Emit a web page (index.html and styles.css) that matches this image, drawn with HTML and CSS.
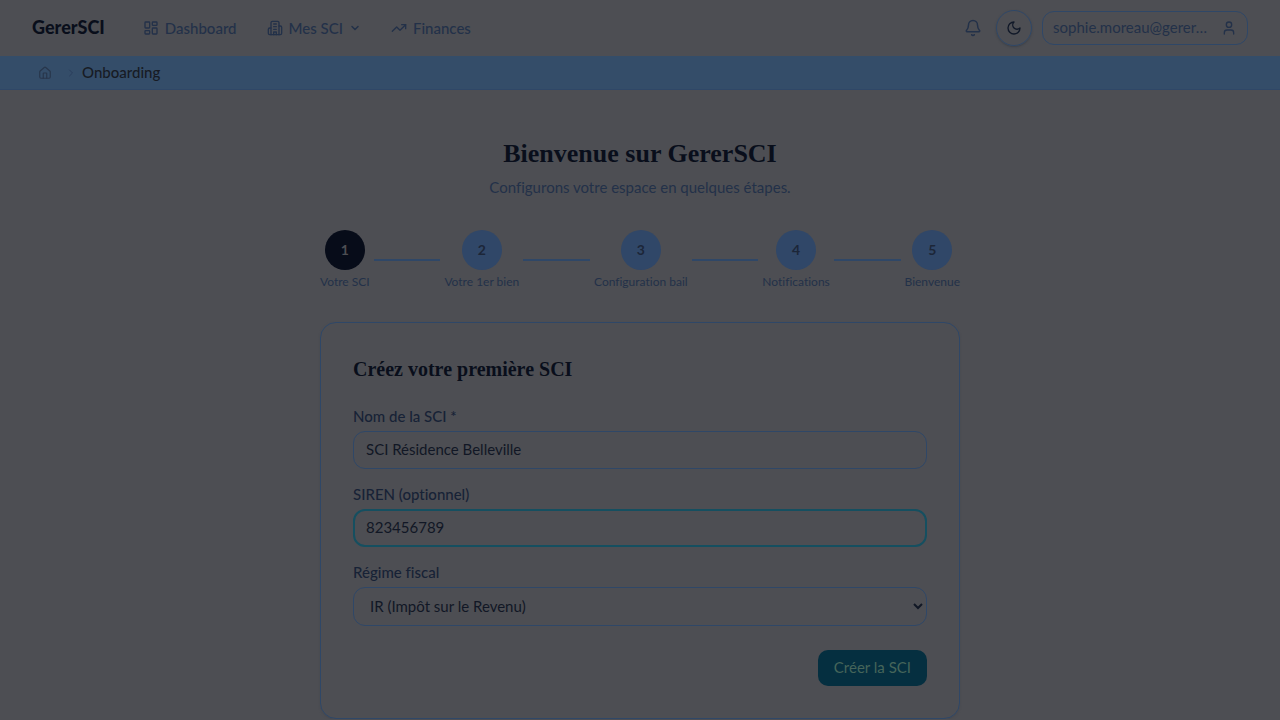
FILE: index.html
```
<!DOCTYPE html>
<html lang="fr">

<head>
  <meta charset="utf-8">
  <title>GererSCI - Onboarding</title>
  <meta name="viewport" content="width=device-width, initial-scale=1">
  <link rel="stylesheet" href="styles.css">
</head>

<body>
  <header class="topbar">
    <a class="brand" href="#">GererSCI</a>
    <nav class="main-nav" aria-label="Navigation principale">
      <a class="nav-link" href="#">
        <svg class="icon" viewBox="0 0 24 24"><rect x="3" y="3" width="7" height="9" rx="1"/><rect x="14" y="3" width="7" height="5" rx="1"/><rect x="14" y="12" width="7" height="9" rx="1"/><rect x="3" y="16" width="7" height="5" rx="1"/></svg>
        Dashboard
      </a>
      <button class="nav-link" type="button">
        <svg class="icon" viewBox="0 0 24 24"><path d="M6 22V4a2 2 0 0 1 2-2h8a2 2 0 0 1 2 2v18Z"/><path d="M6 12H4a2 2 0 0 0-2 2v6a2 2 0 0 0 2 2h2M18 9h2a2 2 0 0 1 2 2v9a2 2 0 0 1-2 2h-2M10 6h4M10 10h4M10 14h4M10 22v-4h4v4"/></svg>
        Mes SCI
        <svg class="icon icon-chevron" viewBox="0 0 24 24"><path d="m6 9 6 6 6-6"/></svg>
      </button>
      <a class="nav-link" href="#">
        <svg class="icon" viewBox="0 0 24 24"><path d="m22 7-8.500 8.500-5-5L2 17"/><path d="M16 7h6v6"/></svg>
        Finances
      </a>
    </nav>
    <div class="actions">
      <button class="bell" type="button" aria-label="Notifications">
        <svg class="icon icon-bell" viewBox="0 0 24 24"><path d="M10.270 21a2 2 0 0 0 3.460 0"/><path d="M3.260 15.330A1 1 0 0 0 4 17h16a1 1 0 0 0 .740-1.670C19.410 13.960 18 12.500 18 8A6 6 0 0 0 6 8c0 4.500-1.410 5.960-2.740 7.330"/></svg>
      </button>
      <button class="theme" type="button" aria-label="Mode sombre">
        <svg class="icon" viewBox="0 0 24 24"><path d="M12 3a6 6 0 0 0 9 9 9 9 0 1 1-9-9Z"/></svg>
      </button>
      <button class="account" type="button">
        <span class="email">sophie.moreau@gerer…</span>
        <svg class="icon" viewBox="0 0 24 24"><circle cx="12" cy="7" r="4"/><path d="M19 21v-2a4 4 0 0 0-4-4H9a4 4 0 0 0-4 4v2"/></svg>
      </button>
    </div>
  </header>

  <nav class="breadcrumb" aria-label="Fil d'Ariane">
    <a class="home" href="#" aria-label="Accueil">
      <svg class="icon icon-home" viewBox="0 0 24 24"><path d="M15 21v-8a1 1 0 0 0-1-1h-4a1 1 0 0 0-1 1v8"/><path d="M3 10a2 2 0 0 1 .710-1.530l7-6a2 2 0 0 1 2.580 0l7 6A2 2 0 0 1 21 10v9a2 2 0 0 1-2 2H5a2 2 0 0 1-2-2z"/></svg>
    </a>
    <svg class="icon icon-sep" viewBox="0 0 24 24"><path d="m9 18 6-6-6-6"/></svg>
    <span>Onboarding</span>
  </nav>

  <main class="page">
    <h1>Bienvenue sur GererSCI</h1>
    <p class="intro">Configurons votre espace en quelques étapes.</p>

    <ol class="steps">
      <li class="step current"><span class="dot">1</span><span>Votre SCI</span></li>
      <li class="line" aria-hidden="true"></li>
      <li class="step"><span class="dot">2</span><span>Votre 1er bien</span></li>
      <li class="line" aria-hidden="true"></li>
      <li class="step"><span class="dot">3</span><span>Configuration bail</span></li>
      <li class="line" aria-hidden="true"></li>
      <li class="step"><span class="dot">4</span><span>Notifications</span></li>
      <li class="line" aria-hidden="true"></li>
      <li class="step"><span class="dot">5</span><span>Bienvenue</span></li>
    </ol>

    <form class="card">
      <h2>Créez votre première SCI</h2>
      <div class="field">
        <label for="nom">Nom de la SCI *</label>
        <input id="nom" name="nom" type="text" value="SCI Résidence Belleville" required>
      </div>
      <div class="field">
        <label for="siren">SIREN (optionnel)</label>
        <input class="active" id="siren" name="siren" type="text" value="823456789">
      </div>
      <div class="field">
        <label for="regime">Régime fiscal</label>
        <select id="regime" name="regime">
          <option>IR (Impôt sur le Revenu)</option>
          <option>IS (Impôt sur les Sociétés)</option>
        </select>
      </div>
      <div class="form-actions">
        <button class="submit" type="submit">Créer la SCI</button>
      </div>
    </form>
  </main>
</body>

</html>
```
FILE: styles.css
```
:root {
  --bg: #4d4e53;
  --band: #344d69;
  --line: #2f4767;
  --ink: #090e1b;
  --text: #172236;
  --muted: #233149;
  --teal: #154f60;
}

* {
  box-sizing: border-box;
}

body {
  margin: 0;
  background: var(--bg);
  color: var(--text);
  font-family: Lato, "Open Sans", sans-serif;
  font-size: 15px;
  font-variant-ligatures: none;
  line-height: 20px;
}

a {
  color: inherit;
  text-decoration: none;
}

button,
input,
select {
  font: inherit;
  color: inherit;
}

button {
  padding: 0;
  border: 0;
  background: none;
}

h1,
h2 {
  margin: 0;
  color: var(--ink);
  font-family: "Liberation Serif", serif;
  font-weight: bold;
}

/* header */
.topbar {
  display: flex;
  align-items: center;
  height: 56px;
  padding: 0 32px;
}

.brand {
  margin-right: 38px;
  padding-bottom: 2px;
  color: var(--ink);
  font-size: 18px;
  font-weight: 900;
}

.main-nav {
  display: flex;
  gap: 30px;
}

.nav-link {
  display: flex;
  align-items: center;
  gap: 6px;
  padding-bottom: 1px;
  color: var(--muted);
  font-weight: 500;
}

.icon {
  flex: none;
  width: 16px;
  height: 16px;
  fill: none;
  stroke: currentColor;
  stroke-width: 2;
  stroke-linecap: round;
  stroke-linejoin: round;
}

.icon-chevron {
  width: 12px;
  height: 12px;
  stroke-width: 3;
}

.icon-bell {
  width: 18px;
  height: 18px;
}

.actions {
  display: flex;
  align-items: center;
  gap: 10px;
  margin-left: auto;
}

.bell,
.theme {
  display: flex;
  align-items: center;
  justify-content: center;
}

.bell {
  width: 26px;
  height: 36px;
  color: var(--muted);
}

.theme {
  width: 36px;
  height: 36px;
  border: 1px solid var(--line);
  border-radius: 50%;
  box-shadow: 0 1px 2px #3c4048;
  color: #101828;
}

.account {
  display: flex;
  align-items: center;
  justify-content: space-between;
  width: 206px;
  height: 34px;
  padding: 0 10px;
  border: 1px solid var(--line);
  border-radius: 12px;
  color: var(--muted);
}

.email {
  padding-bottom: 2px;
  white-space: nowrap;
}

/* breadcrumb */
.breadcrumb {
  display: flex;
  align-items: center;
  height: 34px;
  padding: 0 38px;
  border-bottom: 1px solid var(--line);
  background: var(--band);
  color: #171b24;
  font-weight: 500;
}

.breadcrumb span {
  padding-bottom: 2px;
}

.home {
  display: flex;
  margin-right: 13px;
  color: #28364b;
}

.icon-home {
  width: 14px;
  height: 14px;
}

.icon-sep {
  width: 12px;
  height: 12px;
  margin-right: 5px;
  color: #2a3d5c;
}

/* onboarding */
.page {
  max-width: 640px;
  margin: 0 auto;
  padding-top: 48px;
}

h1 {
  font-size: 26px;
  line-height: 32px;
  text-align: center;
}

.intro {
  margin: 7px 0 33px;
  color: var(--muted);
  text-align: center;
}

.steps {
  display: flex;
  align-items: center;
  margin: 0 0 32px;
  padding: 0;
  list-style: none;
}

.step {
  display: flex;
  flex-direction: column;
  align-items: center;
  gap: 4px;
  color: var(--muted);
  font-size: 12px;
  line-height: 16px;
}

.dot {
  width: 40px;
  border-radius: 50%;
  background: #304768;
  color: #1c2638;
  font-size: 14px;
  font-weight: bold;
  line-height: 40px;
  text-align: center;
}

.current .dot {
  background: #070c19;
  color: #4d4e53;
}

.line {
  flex: 1;
  height: 2px;
  margin: 0 4px;
  background: var(--line);
}

.card {
  padding: 32px;
  border: 1px solid var(--line);
  border-radius: 16px;
  box-shadow: 0 1px 2px #45484f;
}

h2 {
  margin-bottom: 24px;
  font-size: 20px;
  line-height: 28px;
}

.field {
  display: flex;
  flex-direction: column;
  gap: 6px;
  margin-bottom: 16px;
}

.field label {
  font-weight: 500;
  line-height: 18px;
}

.field input,
.field select {
  width: 100%;
  height: 38px;
  padding: 0 12px 2px;
  border: 1px solid var(--line);
  border-radius: 12px;
  outline: none;
  background: transparent;
  color: #111725;
}

.field .active {
  padding: 0 11px 2px;
  border: 2px solid var(--teal);
}

.field select {
  height: 39px;
  padding-right: 0;
}

.form-actions {
  display: flex;
  justify-content: flex-end;
  margin-top: 24px;
}

.submit {
  height: 36px;
  padding: 0 16px 2px;
  border-radius: 10px;
  background: #052f40;
  color: #46655a;
}
```
